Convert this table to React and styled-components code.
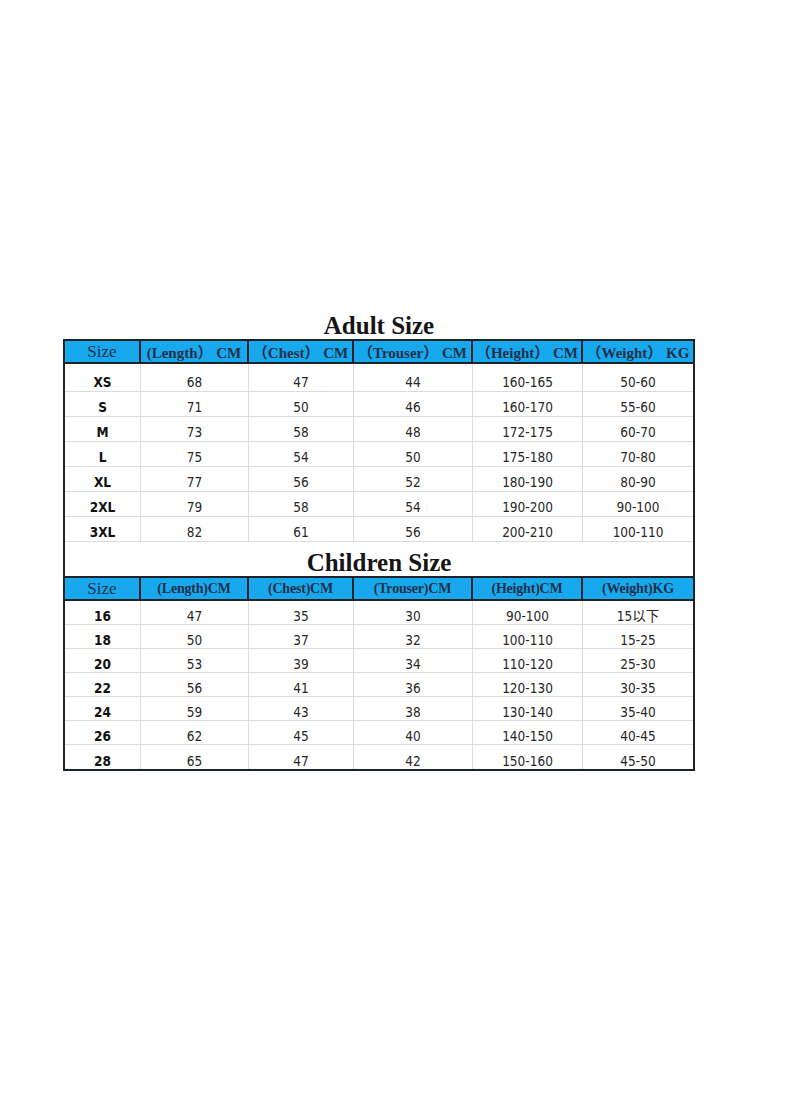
import React from 'react';
import styled, { createGlobalStyle } from 'styled-components';

const GlobalStyle = createGlobalStyle`
  html, body {
    margin: 0;
    padding: 0;
    background: #ffffff;
  }
  * {
    box-sizing: border-box;
  }
`;

const COLS = '76px 108px 105px 119px 110px 110px';
const DARK = '#1d232b';
const GRID = '#dcdcdc';

const Page = styled.div`
  width: 800px;
  height: 1096px;
  padding: 312px 0 0 63px;
  background: #ffffff;
`;

const Sheet = styled.div`
  width: 632px;
`;

const Title = styled.div`
  height: ${p => p.h}px;
  display: flex;
  align-items: flex-end;
  justify-content: center;
  padding-bottom: ${p => p.pb}px;
  font-family: "Liberation Serif", "Times New Roman", serif;
  font-weight: bold;
  font-size: 25px;
  line-height: 25px;
  color: #151515;
`;

const Frame = styled.div`
  border-left: 2px solid ${DARK};
  border-right: 2px solid ${DARK};
  border-bottom: 2px solid ${DARK};
`;

const HeadRow = styled.div`
  display: grid;
  grid-template-columns: ${COLS};
  height: 25px;
  background: #18a8ee;
  border-top: 2px solid ${DARK};
  border-bottom: 2px solid ${DARK};
`;

const HeadCell = styled.div`
  display: flex;
  align-items: center;
  justify-content: center;
  overflow: hidden;
  white-space: nowrap;
  border-right: 2px solid ${DARK};
  font-family: "Liberation Serif", "Noto Sans CJK SC", serif;
  font-weight: ${p => (p.plain ? 'normal' : 'bold')};
  font-size: ${p => (p.plain ? '17px' : p.tight ? '14px' : '15px')};
  letter-spacing: ${p => (p.tight ? '-0.2px' : '0')};
  color: #1f3149;

  &:last-child {
    border-right: none;
  }
`;

const Row = styled.div`
  display: grid;
  grid-template-columns: ${COLS};
  height: ${p => p.h}px;
  border-bottom: ${p => (p.last ? 'none' : `1px solid ${GRID}`)};
`;

const Cell = styled.div`
  display: flex;
  align-items: flex-end;
  justify-content: center;
  padding-bottom: ${p => p.pb}px;
  border-right: 1px solid ${GRID};
  font-family: "DejaVu Sans Condensed", "DejaVu Sans", "Noto Sans CJK SC", sans-serif;
  font-stretch: condensed;
  font-size: 13.5px;
  line-height: 16px;
  font-weight: ${p => (p.bold ? 'bold' : 'normal')};
  color: ${p => (p.bold ? '#111111' : '#262626')};
  white-space: nowrap;

  &:last-child {
    border-right: none;
  }
`;

const adultHead = ['(Length\uFF09 CM', '\uFF08Chest\uFF09 CM', '\uFF08Trouser\uFF09 CM', '\uFF08Height\uFF09 CM', '\uFF08Weight\uFF09 KG'];
const childHead = ['(Length)CM', '(Chest)CM', '(Trouser)CM', '(Height)CM', '(Weight)KG'];

const adultRows = [
  ['XS', '68', '47', '44', '160-165', '50-60'],
  ['S', '71', '50', '46', '160-170', '55-60'],
  ['M', '73', '58', '48', '172-175', '60-70'],
  ['L', '75', '54', '50', '175-180', '70-80'],
  ['XL', '77', '56', '52', '180-190', '80-90'],
  ['2XL', '79', '58', '54', '190-200', '90-100'],
  ['3XL', '82', '61', '56', '200-210', '100-110'],
];

const childRows = [
  ['16', '47', '35', '30', '90-100', '15以下'],
  ['18', '50', '37', '32', '100-110', '15-25'],
  ['20', '53', '39', '34', '110-120', '25-30'],
  ['22', '56', '41', '36', '120-130', '30-35'],
  ['24', '59', '43', '38', '130-140', '35-40'],
  ['26', '62', '45', '40', '140-150', '40-45'],
  ['28', '65', '47', '42', '150-160', '45-50'],
];

const Header = ({ labels, tight }) => (
  <HeadRow>
    <HeadCell plain>Size</HeadCell>
    {labels.map(l => (
      <HeadCell key={l} tight={tight}>{l}</HeadCell>
    ))}
  </HeadRow>
);

const DataRow = ({ cells, h, pb, last }) => (
  <Row h={h} last={last}>
    {cells.map((c, i) => (
      <Cell key={i} bold={i === 0} pb={pb}>{c}</Cell>
    ))}
  </Row>
);

export default function App() {
  return (
    <Page>
      <GlobalStyle />
      <Sheet>
        <Title h={27} pb={1}>Adult Size</Title>
        <Frame>
          <Header labels={adultHead} />
          {adultRows.map((r, i) => (
            <DataRow key={r[0]} cells={r} h={i === 0 ? 28 : 25} pb={1} />
          ))}
          <Title h={34} pb={1}>Children Size</Title>
          <Header labels={childHead} tight />
          {childRows.map((r, i) => (
            <DataRow
              key={r[0]}
              cells={r}
              h={24}
              pb={0}
              last={i === childRows.length - 1}
            />
          ))}
        </Frame>
      </Sheet>
    </Page>
  );
}
